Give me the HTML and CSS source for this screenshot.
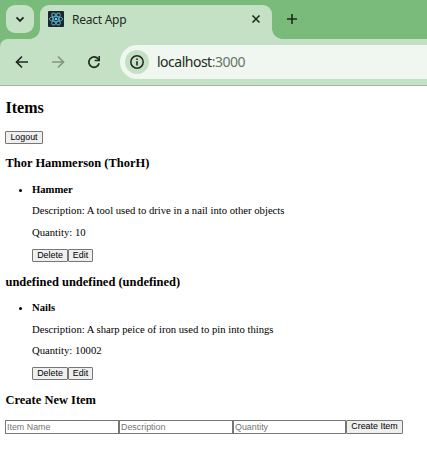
FILE: index.html
```html
<!DOCTYPE html>
<html lang="en">
<head>
<meta charset="utf-8">
<title>React App</title>
<link rel="stylesheet" href="styles.css">
</head>
<body>
<header class="browser">
  <div class="tabstrip">
    <div class="tab-search">
      <svg width="28" height="28" viewBox="0 0 28 28"><path d="M10.5 12.3 14 15.800l3.500-3.500" fill="none" stroke="#1f2a20" stroke-width="1.900"/></svg>
    </div>
    <div class="tab">
      <svg class="favicon" width="16" height="16" viewBox="0 0 16 16"><rect width="16" height="16" rx="1" fill="#20232a"/><g fill="none" stroke="#53b5d0" stroke-width=".9"><ellipse cx="8" cy="8" rx="6.700" ry="2.600"/><ellipse cx="8" cy="8" rx="6.700" ry="2.600" transform="rotate(60 8 8)"/><ellipse cx="8" cy="8" rx="6.700" ry="2.600" transform="rotate(120 8 8)"/></g><circle cx="8" cy="8" r="1.300" fill="#61dafb"/></svg>
      <span class="tab-title">React App</span>
      <svg class="close" width="10" height="10" viewBox="0 0 10 10"><path d="m1.500 1.500 7 7m0-7-7 7" stroke="#1f2a20" stroke-width="1.600"/></svg>
    </div>
    <svg class="new-tab" width="12" height="12" viewBox="0 0 12 12"><path d="M6 1v10M1 6h10" stroke="#1f2a20" stroke-width="1.600"/></svg>
  </div>
  <div class="toolbar">
    <svg class="nav" width="16" height="16" viewBox="0 0 16 16"><path d="M14 8H3M8 2.500 2.500 8 8 13.500" fill="none" stroke="#1f2a20" stroke-width="1.700"/></svg>
    <svg class="nav" width="16" height="16" viewBox="0 0 16 16"><path d="M2 8h11M8 2.500 13.500 8 8 13.500" fill="none" stroke="#839785" stroke-width="1.700"/></svg>
    <svg class="nav" width="16" height="16" viewBox="0 0 16 16"><path d="M13.100 9.300A5.200 5.200 0 1 1 12 4.700L13 6" fill="none" stroke="#1f2a20" stroke-width="1.700"/><path d="M14 2v5.300H8.700V5.700h3.700V2z" fill="#1f2a20"/></svg>
    <div class="address">
      <span class="info"><svg width="16" height="16" viewBox="0 0 16 16"><circle cx="8" cy="8" r="6.200" fill="none" stroke="#1f2a20" stroke-width="1.500"/><path d="M8 7.200V11.500M8 4.400V6" stroke="#1f2a20" stroke-width="1.600"/></svg></span>
      <span class="url">localhost<span class="port">:3000</span></span>
    </div>
  </div>
</header>
<main class="page">
  <h2>Items</h2>
  <div class="actions logout"><button class="w-logout">Logout</button></div>
  <h3>Thor Hammerson (ThorH)</h3>
  <ul>
    <li>
      <h4>Hammer</h4>
      <p>Description: A tool used to drive in a nail into other objects</p>
      <p>Quantity: 10</p>
      <div class="actions"><button class="w-delete">Delete</button><button class="w-edit">Edit</button></div>
    </li>
  </ul>
  <h3>undefined undefined (undefined)</h3>
  <ul>
    <li>
      <h4>Nails</h4>
      <p>Description: A sharp peice of iron used to pin into things</p>
      <p>Quantity: 10002</p>
      <div class="actions"><button class="w-delete">Delete</button><button class="w-edit">Edit</button></div>
    </li>
  </ul>
  <h3>Create New Item</h3>
  <form class="create">
    <input placeholder="Item Name"><input placeholder="Description"><input class="w-quantity" placeholder="Quantity"><button class="w-create" type="button">Create Item</button>
  </form>
</main>
</body>
</html>
```
FILE: styles.css
```css
* { box-sizing: border-box; }
body { margin: 0; background: #fff; color: #000; overflow: hidden; }
svg { display: block; flex: none; }

.browser { font-family: "Noto Sans", sans-serif; background: #7abb7c; height: 86px; }
.tabstrip { display: flex; height: 39px; padding: 5px 0 0 6px; }
.tab-search { width: 28px; height: 28px; border-radius: 9px; background: #c5e1c5; margin-right: 6px; }
.tab { width: 232px; height: 34px; border-radius: 9px 9px 0 0; background: #c5e1c5; display: flex; align-items: center; padding: 0 11px 6px 8px; position: relative; }
.tab::before, .tab::after { content: ""; position: absolute; bottom: 0; width: 10px; height: 10px; }
.tab::before { left: -10px; background: radial-gradient(circle at 0 0, transparent 9.5px, #c5e1c5 10px); }
.tab::after { right: -10px; background: radial-gradient(circle at 100% 0, transparent 9.5px, #c5e1c5 10px); }
.tab-title { margin: 2px 0 0 8px; font-size: 12px; line-height: 16px; letter-spacing: -.25px; color: #1f2a20; flex: 1; }
.new-tab { margin: 8px 0 0 14px; }

.toolbar { display: flex; align-items: center; height: 47px; padding-left: 14px; background: #c5e1c5; border-bottom: 1px solid #a5b5a5; border-top-left-radius: 8px; }
.nav { margin-right: 20px; }
.nav + .nav + .nav { margin-right: 18px; }
.address { flex: 1; height: 34px; background: #f0f7f0; border-radius: 17px 0 0 17px; display: flex; align-items: center; padding-left: 5px; }
.info { width: 24px; height: 24px; border-radius: 50%; background: #c5e1c5; display: flex; align-items: center; justify-content: center; }
.url { margin-left: 8px; font-size: 14px; line-height: 20px; letter-spacing: -.5px; color: #1f2a20; }
.port { color: #687569; }

.page { padding: 13px 5px 0; font-family: "Liberation Serif", serif; font-size: 10.67px; line-height: 12px; }
h2 { margin: 0; padding-left: .5px; font-size: 16px; line-height: 18px; }
h3 { margin: 12px 0 0; padding-left: .5px; font-size: 12.48px; line-height: 14px; }
h4 { margin: 0; font-size: 10.67px; line-height: 12px; }
ul { margin: 13px 0 0; padding: 0 0 0 27px; }
ul + h3 { margin-top: 13px; }
ul + h3 + ul { margin-top: 12.2px; }
ul + h3:has(+ form) { margin-top: 12.8px; }
li p { margin: 9.4px 0 0; }
.actions { display: flex; margin-top: 11.2px; height: 13px; }
.logout { margin-top: 14px; }
button, input { font-family: "Liberation Sans", sans-serif; font-size: 8.89px; line-height: 11px; height: 13px; margin: 0; white-space: nowrap; }
button { padding: 0; border: 1px solid #767676; border-radius: 1px; background: #efefef; color: #000; }
.w-logout { width: 38px; }
.w-delete { width: 36px; }
.w-edit { width: 25px; }
.create { display: flex; margin: 13px 0 0; }
input { width: 114px; height: 14px; padding: 0 1px; border: 1px solid #767676; border-radius: 0; background: #fff; }
input::placeholder { color: #757575; opacity: 1; }
.w-quantity { width: 113px; }
.w-create { width: 57px; height: 14px; }
```
